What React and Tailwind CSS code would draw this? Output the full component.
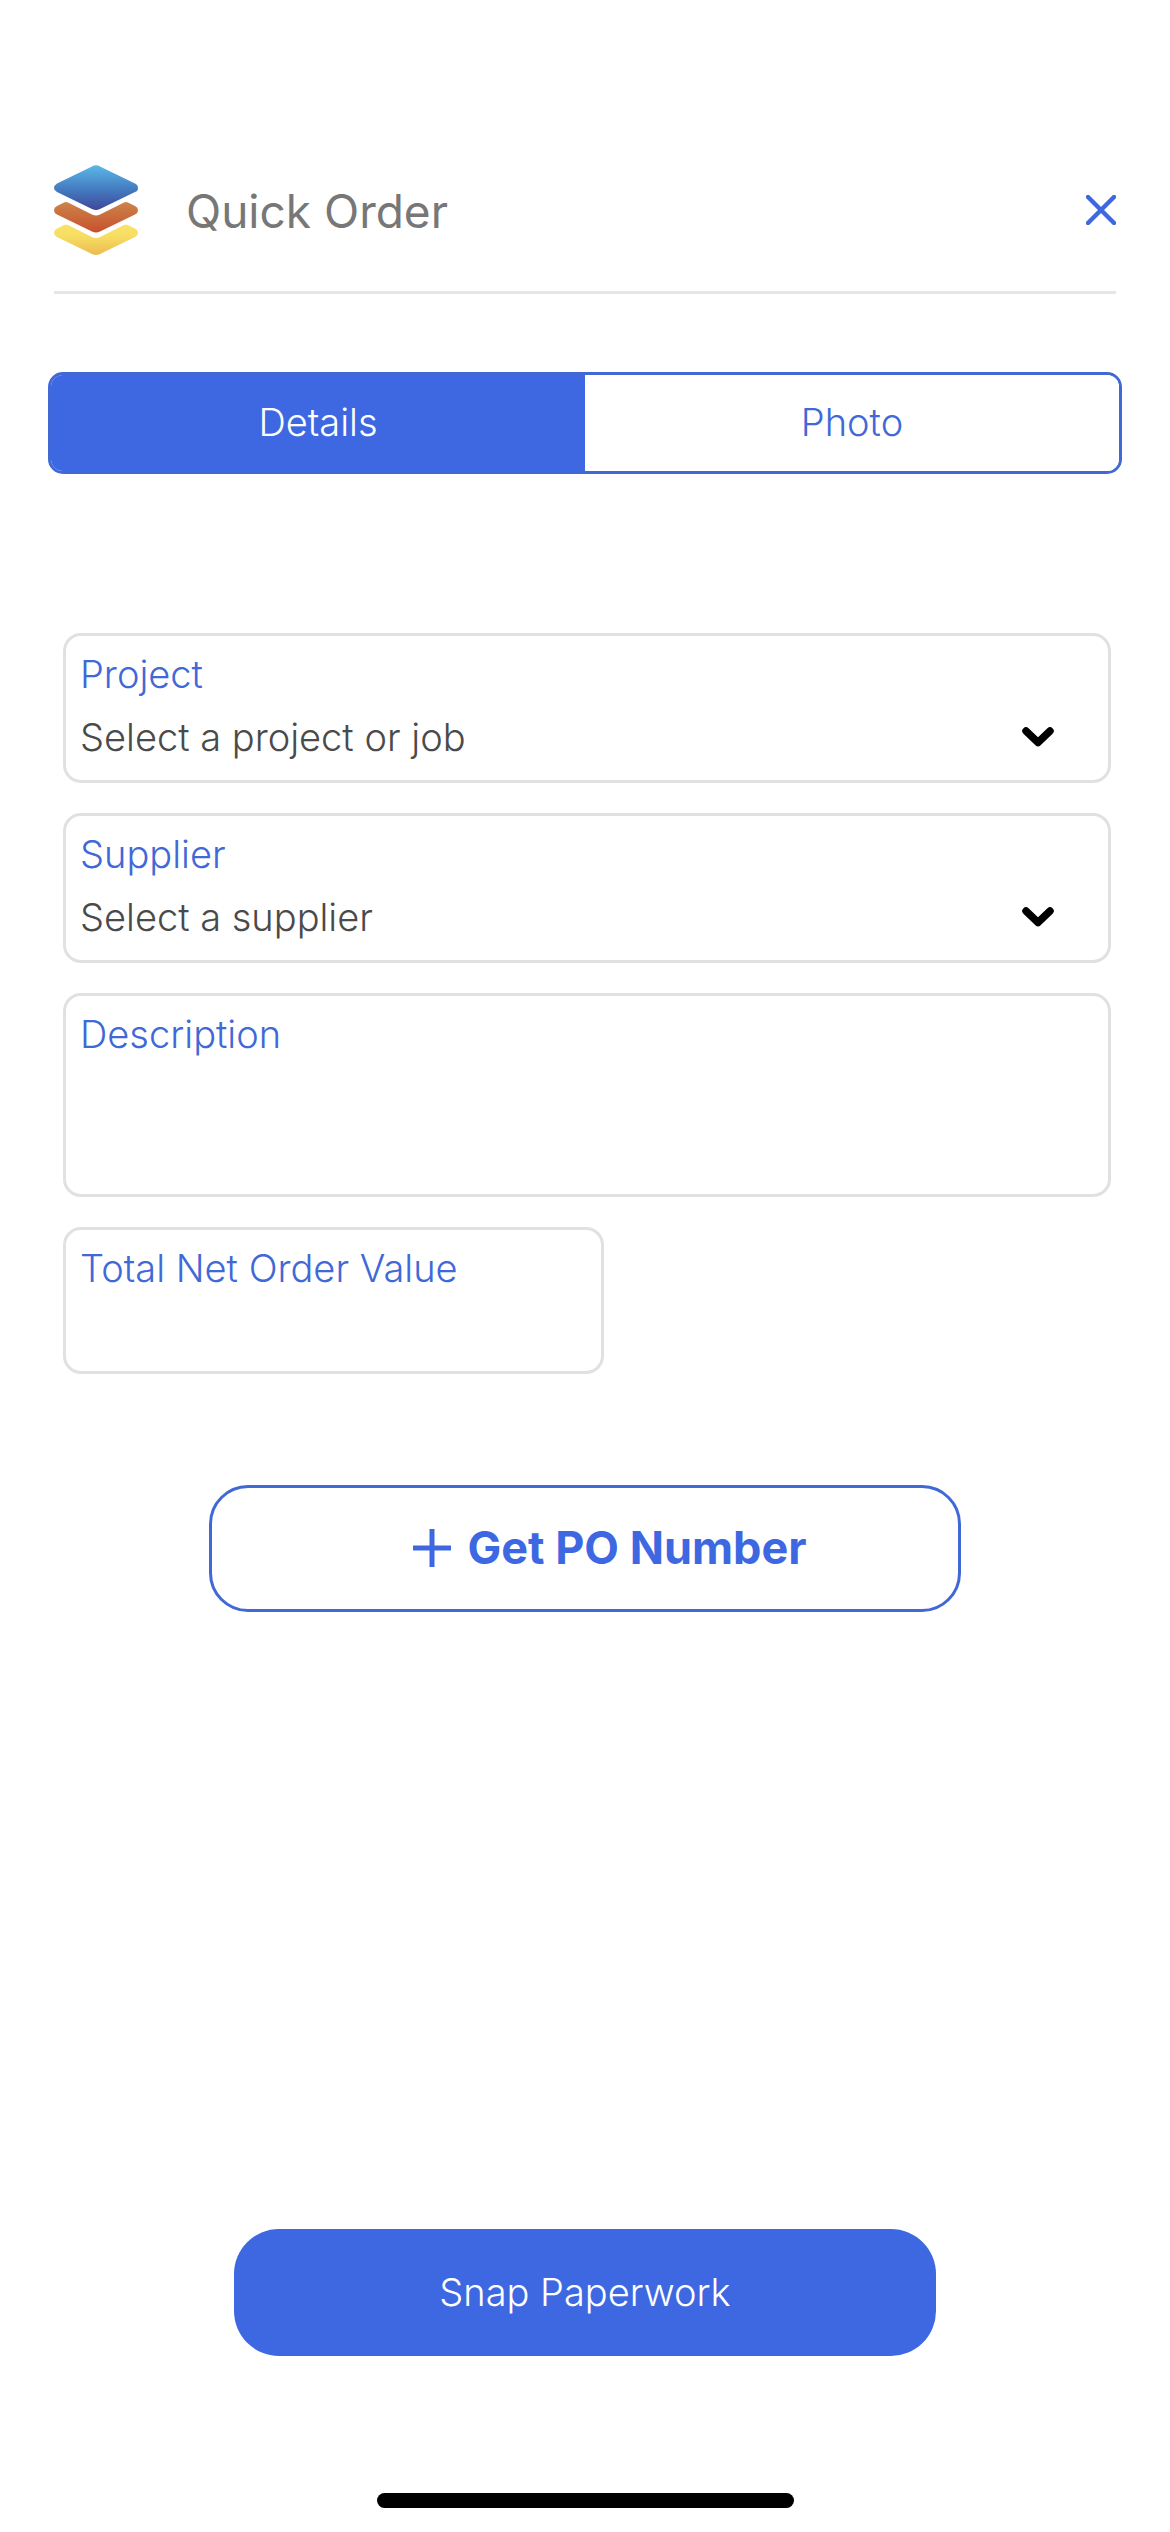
import { useState } from 'react'

function Logo() {
  return (
    <svg viewBox="0 0 84 90" className="w-[84px] h-[90px] shrink-0" aria-hidden="true">
      <defs>
        <linearGradient id="layerTop" x1="0" y1="0" x2="0" y2="1">
          <stop offset="0" stopColor="#5bb8e8" />
          <stop offset="0.5" stopColor="#4580c3" />
          <stop offset="1" stopColor="#3f479b" />
        </linearGradient>
        <linearGradient id="layerMid" x1="0" y1="0" x2="0" y2="1">
          <stop offset="0" stopColor="#cb8449" />
          <stop offset="1" stopColor="#c9502d" />
        </linearGradient>
        <linearGradient id="layerBottom" x1="0" y1="0" x2="0" y2="1">
          <stop offset="0" stopColor="#f8e468" />
          <stop offset="0.4" stopColor="#f6dd62" />
          <stop offset="1" stopColor="#ecbb4f" />
        </linearGradient>
      </defs>
      <path
        fill="url(#layerTop)"
        d="M38 1.500Q42-1 46 1.500L81 18.500Q84 20 84 23T81 27L46 44Q42 46 38 44L3 27Q0 25.500 0 23T3 18.500Z"
      />
      <path
        fill="url(#layerMid)"
        d="M3 41L10 37.500Q12 36.500 14 37.500L38 49.500Q42 51.500 46 49.500L70 37.500Q72 36.500 74 37.500L81 41Q84 42.500 84 45.300T81 49.500L46 66.500Q42 68.500 38 66.500L3 49.500Q0 48 0 45.300T3 41Z"
      />
      <path
        fill="url(#layerBottom)"
        d="M3 63.500L10 60Q12 59 14 60L38 72Q42 74 46 72L70 60Q72 59 74 60L81 63.500Q84 65 84 67.800T81 72L46 89Q42 91 38 89L3 72Q0 70.500 0 67.800T3 63.500Z"
      />
    </svg>
  )
}

function Chevron() {
  return (
    <svg viewBox="0 0 32 20" className="pointer-events-none absolute right-[54px] bottom-[33px] w-8 h-5" aria-hidden="true">
      <path d="M4 4L16 15.500L28 4" fill="none" stroke="#000" strokeWidth="7.500" strokeLinecap="round" strokeLinejoin="round" />
    </svg>
  )
}

const fieldBox = 'border-3 border-[#e1e1e1] rounded-[18px] px-[14px] pt-[14px]'
const fieldLabel = 'block text-[38px] leading-[48px] font-light text-[#4068d6]'

function SelectField({ id, label, placeholder }) {
  return (
    <div className={`relative h-[150px] ${fieldBox}`}>
      <label htmlFor={id} className={fieldLabel}>{label}</label>
      <select
        id={id}
        className="block w-full h-[48px] mt-[15px] appearance-none bg-transparent text-[38px] leading-[48px] font-light text-[#4a4a4a] outline-none"
      >
        <option>{placeholder}</option>
      </select>
      <Chevron />
    </div>
  )
}

export default function App() {
  const [tab, setTab] = useState('details')

  const tabStyle = (name) =>
    `flex-1 pb-[2px] text-[38px] leading-[48px] font-light ${
      tab === name ? 'bg-[#3e68e1] text-white' : 'bg-white text-[#4068d6]'
    }`

  return (
    <div className="min-h-screen flex flex-col bg-white font-['Inter',sans-serif]">
      {/* Header */}
      <header className="mx-[54px] mt-[165px] pb-9 flex items-center border-b-3 border-[#e5e6eb]">
        <Logo />
        <h1 className="ml-12 pt-[2px] flex-1 text-[46px] leading-[60px] font-normal text-[#777]">Quick Order</h1>
        <button aria-label="Close" className="text-[#3e68e1]">
          <svg viewBox="0 0 30 30" className="w-[30px] h-[30px]" aria-hidden="true">
            <path d="M2 2L28 28M28 2L2 28" stroke="currentColor" strokeWidth="4.500" strokeLinecap="round" />
          </svg>
        </button>
      </header>

      {/* Tabs */}
      <div role="tablist" className="mx-12 mt-[78px] h-[102px] flex overflow-hidden rounded-[15px] border-3 border-[#4068d6]">
        <button role="tab" aria-selected={tab === 'details'} onClick={() => setTab('details')} className={tabStyle('details')}>
          Details
        </button>
        <button role="tab" aria-selected={tab === 'photo'} onClick={() => setTab('photo')} className={tabStyle('photo')}>
          Photo
        </button>
      </div>

      {/* Order form */}
      <form className="mt-[159px] flex flex-col" onSubmit={(e) => e.preventDefault()}>
        <div className="ml-[63px] mr-[59px] flex flex-col gap-[30px]">
          <SelectField id="project" label="Project" placeholder="Select a project or job" />
          <SelectField id="supplier" label="Supplier" placeholder="Select a supplier" />
          <div className={`h-[204px] ${fieldBox}`}>
            <label htmlFor="description" className={fieldLabel}>Description</label>
            <textarea id="description" className="block w-full h-[120px] resize-none text-[38px] leading-[48px] font-light text-[#4a4a4a] outline-none" />
          </div>
          <div className={`w-[541px] max-w-full h-[147px] ${fieldBox}`}>
            <label htmlFor="total" className={fieldLabel}>Total Net Order Value</label>
            <input id="total" type="text" inputMode="decimal" className="block w-full h-[60px] text-[38px] font-light text-[#4a4a4a] outline-none" />
          </div>
        </div>

        <button
          type="submit"
          className="mt-[111px] w-[752px] max-w-full h-[127px] self-center flex items-center justify-center gap-4 pl-[50px] pb-[2px] rounded-[39px] border-3 border-[#4068d6] text-[#3e68e1] text-[45px] leading-[54px] font-bold"
        >
          <svg viewBox="0 0 38 38" className="w-[38px] h-[38px]" aria-hidden="true">
            <path d="M19 0V38M0 19H38" stroke="currentColor" strokeWidth="5" />
          </svg>
          Get PO Number
        </button>
      </form>

      <button className="mt-auto w-[702px] max-w-full h-[127px] pb-[2px] self-center rounded-[45px] bg-[#3e68e1] text-white text-[38px] leading-[48px] font-light">
        Snap Paperwork
      </button>

      {/* Home indicator */}
      <div className="mt-[137px] mb-6 w-[417px] h-[15px] self-center rounded-full bg-black" />
    </div>
  )
}
